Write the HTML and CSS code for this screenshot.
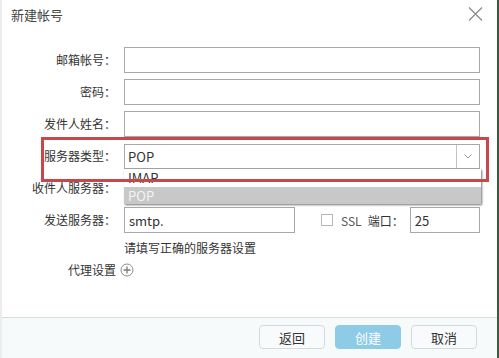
FILE: index.html
```html
<!DOCTYPE html>
<html lang="zh-CN">
  <head>
    <meta charset="UTF-8" />
    <meta name="viewport" content="width=device-width, initial-scale=1.0" />
    <title>新建帐号</title>
    <link rel="stylesheet" href="styles.css">
  </head>
  <body>
    <div class="dialog">
      <div class="header">
        <span class="title">新建帐号</span>
        <button class="close" title="关闭">
          <svg width="15" height="14" viewBox="0 0 15 14">
            <path d="M1 0.5 L14 13.5 M14 0.5 L1 13.5" stroke="#8a8a8a" stroke-width="1.2" fill="none" />
          </svg>
        </button>
      </div>

      <div class="body">
        <div class="form">
          <label class="label">邮箱帐号<span class="colon">：</span></label>
          <input class="field" type="text" />

          <label class="label">密码<span class="colon">：</span></label>
          <input class="field" type="password" />

          <label class="label">发件人姓名<span class="colon">：</span></label>
          <input class="field" type="text" />

          <label class="label">服务器类型<span class="colon">：</span></label>
          <div class="select">
            <span class="select-value">POP</span>
            <span class="select-arrow">
              <svg width="8" height="5" viewBox="0 0 8 5">
                <path d="M0.5 0.5 L4 4 L7.5 0.5" stroke="#9a9a9a" stroke-width="1" fill="none" />
              </svg>
            </span>
            <ul class="options">
              <li>IMAP</li>
              <li class="active">POP</li>
            </ul>
          </div>

          <label class="label">收件人服务器<span class="colon">：</span></label>
          <input class="field" type="text" value="" />

          <label class="label">发送服务器<span class="colon">：</span></label>
          <div class="send-row">
            <input class="field smtp" type="text" value="smtp." />
            <span class="check"></span>
            <span class="ssl">SSL</span>
            <span class="port-label">端口<span class="colon">：</span></span>
            <input class="field port" type="text" value="25" />
          </div>

          <span></span>
          <div class="hint">请填写正确的服务器设置</div>

          <label class="label proxy">代理设置</label>
          <div class="proxy-add">
            <svg width="14" height="14" viewBox="0 0 14 14">
              <circle cx="7" cy="7" r="6" stroke="#8c8c8c" stroke-width="1" fill="none" />
              <path d="M7 3.5 V10.5 M3.5 7 H10.5" stroke="#7a7a7a" stroke-width="1.3" />
            </svg>
          </div>
        </div>
      </div>

      <div class="footer">
        <button class="btn">返回</button>
        <button class="btn primary">创建</button>
        <button class="btn">取消</button>
      </div>

      <!-- 标注框 -->
      <div class="mark"></div>
    </div>
  </body>
</html>
```

FILE: styles.css
```css
* {
  box-sizing: border-box;
}
body {
  margin: 0;
  font-family: "Noto Sans CJK SC", "DejaVu Sans", sans-serif;
  font-size: 12px;
  color: #333;
  background: #fff;
}
.dialog {
  position: relative;
  width: 499px;
  height: 358px;
  display: flex;
  flex-direction: column;
  border-left: 2px solid #ededed;
  border-right: 2px solid #3b5a3f;
  background: #fff;
}
.header {
  height: 28px;
  display: flex;
  align-items: center;
  justify-content: space-between;
  padding: 0 14px 0 9px;
}
.title {
  font-size: 13px;
  color: #444;
}
.close {
  border: none;
  background: none;
  padding: 0;
  width: 15px;
  height: 14px;
  display: flex;
}
.body {
  flex: 1;
}
.form {
  display: grid;
  grid-template-columns: 114px 1fr;
  column-gap: 8px;
  row-gap: 6px;
  padding: 19px 20px 0 0;
  align-items: center;
}
.label {
  text-align: right;
  line-height: 26px;
  white-space: nowrap;
  font-size: 12px;
}
.colon {
  font-family: "Noto Sans CJK TC", sans-serif;
}
.field {
  height: 26px;
  border: 1px solid #a8a8a8;
  padding: 0 4px;
  font: inherit;
  font-size: 13px;
  color: #333;
  width: 100%;
}
.select {
  position: relative;
  height: 25px;
  border: 1px solid #a8a8a8;
  display: flex;
  align-items: center;
}
.select-value {
  flex: 1;
  padding-left: 3px;
  font-size: 13px;
}
.select-arrow {
  width: 23px;
  height: 100%;
  border-left: 1px solid #c2c2c2;
  display: flex;
  align-items: center;
  justify-content: center;
}
.options {
  position: absolute;
  top: 24px;
  left: -1px;
  right: -2px;
  margin: 0;
  padding: 0;
  list-style: none;
  background: #fff;
  box-shadow: 1px 1px 2px rgba(0, 0, 0, 0.55);
  z-index: 2;
}
.options li {
  height: 17px;
  line-height: 17px;
  padding-left: 4px;
  font-size: 13px;
}
.options li:first-child {
  height: 18px;
}
.options .active {
  background: #c8c8c8;
  color: #f4f4f4;
}
.send-row {
  display: flex;
  align-items: center;
  white-space: nowrap;
}
.smtp {
  width: 171px;
  flex: 0 0 171px;
}
.check {
  flex: 0 0 12px;
  width: 12px;
  height: 12px;
  border: 1px solid #b5b5b5;
  margin-left: 26px;
}
.ssl {
  margin-left: 8px;
  font-size: 12px;
  color: #555;
}
.port-label {
  margin-left: 6px;
  flex-shrink: 0;
}
.port {
  width: 70px;
  flex: 0 0 70px;
  margin-left: 6px;
}
.hint {
  line-height: 16px;
  margin-top: 1px;
}
.proxy {
  line-height: 16px;
}
.proxy-add {
  display: flex;
  align-items: center;
  margin-left: -4px;
}
.footer {
  height: 41px;
  border-top: 1px solid #d9dcdd;
  background: #f6fafb;
  display: flex;
  justify-content: flex-end;
  align-items: flex-start;
  gap: 10px;
  padding: 7px 20px 0 0;
}
.btn {
  width: 66px;
  height: 24px;
  border: 1px solid #d3dadd;
  border-radius: 4px;
  background: #f8fafb;
  font: inherit;
  font-size: 13px;
  color: #333;
  padding: 0;
}
.btn.primary {
  background: #8dcbe6;
  border-color: #8dcbe6;
  color: #fff;
}
.mark {
  position: absolute;
  left: 39px;
  top: 137px;
  width: 448px;
  height: 45px;
  border: 3px solid #c7474b;
  z-index: 3;
}
```
